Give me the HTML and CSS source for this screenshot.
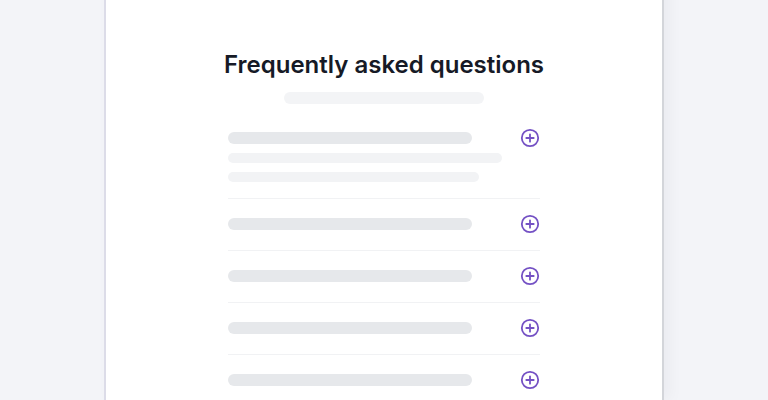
FILE: index.html
```html
<!DOCTYPE html>
<html lang="en">
<head>
<meta charset="utf-8">
<title>FAQ</title>
<link rel="stylesheet" href="styles.css">
</head>
<body>
<main class="card">
  <h1 class="title">Frequently asked questions</h1>
  <div class="subtitle"></div>
  <ul class="faq">
    <li class="item open">
      <div class="row">
        <span class="q"></span>
        <svg class="icon" viewBox="0 0 20 20" width="20" height="20"><circle cx="10" cy="10" r="8.2"/><path d="M10 6.3v7.4M6.3 10h7.4"/></svg>
      </div>
      <div class="answer">
        <span class="a a1"></span>
        <span class="a a2"></span>
      </div>
    </li>
    <li class="item">
      <div class="row">
        <span class="q"></span>
        <svg class="icon" viewBox="0 0 20 20" width="20" height="20"><circle cx="10" cy="10" r="8.2"/><path d="M10 6.3v7.4M6.3 10h7.4"/></svg>
      </div>
    </li>
    <li class="item">
      <div class="row">
        <span class="q"></span>
        <svg class="icon" viewBox="0 0 20 20" width="20" height="20"><circle cx="10" cy="10" r="8.2"/><path d="M10 6.3v7.4M6.3 10h7.4"/></svg>
      </div>
    </li>
    <li class="item">
      <div class="row">
        <span class="q"></span>
        <svg class="icon" viewBox="0 0 20 20" width="20" height="20"><circle cx="10" cy="10" r="8.2"/><path d="M10 6.3v7.4M6.3 10h7.4"/></svg>
      </div>
    </li>
    <li class="item">
      <div class="row">
        <span class="q"></span>
        <svg class="icon" viewBox="0 0 20 20" width="20" height="20"><circle cx="10" cy="10" r="8.2"/><path d="M10 6.3v7.4M6.3 10h7.4"/></svg>
      </div>
    </li>
  </ul>
</main>
</body>
</html>
```

FILE: styles.css
```css
* { box-sizing: border-box; }
html, body { margin: 0; padding: 0; }
body {
  background: #f3f4f8;
  font-family: Inter, "Noto Sans", sans-serif;
  height: 400px;
  overflow: hidden;
  display: flex;
  justify-content: center;
}
.card {
  width: 560px;
  height: 420px;
  margin-top: -20px;
  background: #ffffff;
  border-left: 2px solid #dcdce8;
  border-right: 2px solid #d3d5da;
  box-shadow: 6px 0 14px rgba(30, 35, 60, 0.04);
  padding: 70px 122px 0;
  display: flex;
  flex-direction: column;
  align-items: center;
  overflow: hidden;
}
.card > * { flex-shrink: 0; }
.title {
  margin: 0;
  font-size: 24px;
  line-height: 30px;
  font-weight: 600;
  color: #161a26;
  white-space: nowrap;
}
.subtitle {
  margin-top: 12px;
  width: 200px;
  height: 12px;
  border-radius: 6px;
  background: #f3f4f6;
}
.faq {
  list-style: none;
  margin: 8px 0 0;
  padding: 0;
  width: 312px;
}
.item {
  padding: 15px 0 16px;
  border-bottom: 1px solid #f1f2f4;
}
.item.open { padding-top: 16px; }
.row {
  display: flex;
  align-items: center;
  justify-content: space-between;
  height: 20px;
}
.q {
  width: 244px;
  height: 12px;
  border-radius: 6px;
  background: #e6e8eb;
}
.icon {
  fill: none;
  stroke: #7451c4;
  stroke-width: 1.8;
  stroke-linecap: round;
}
.answer {
  display: flex;
  flex-direction: column;
  gap: 9px;
  padding-top: 5px;
}
.a {
  height: 10px;
  border-radius: 5px;
  background: #f2f3f5;
}
.a1 { width: 274px; }
.a2 { width: 251px; }
```
